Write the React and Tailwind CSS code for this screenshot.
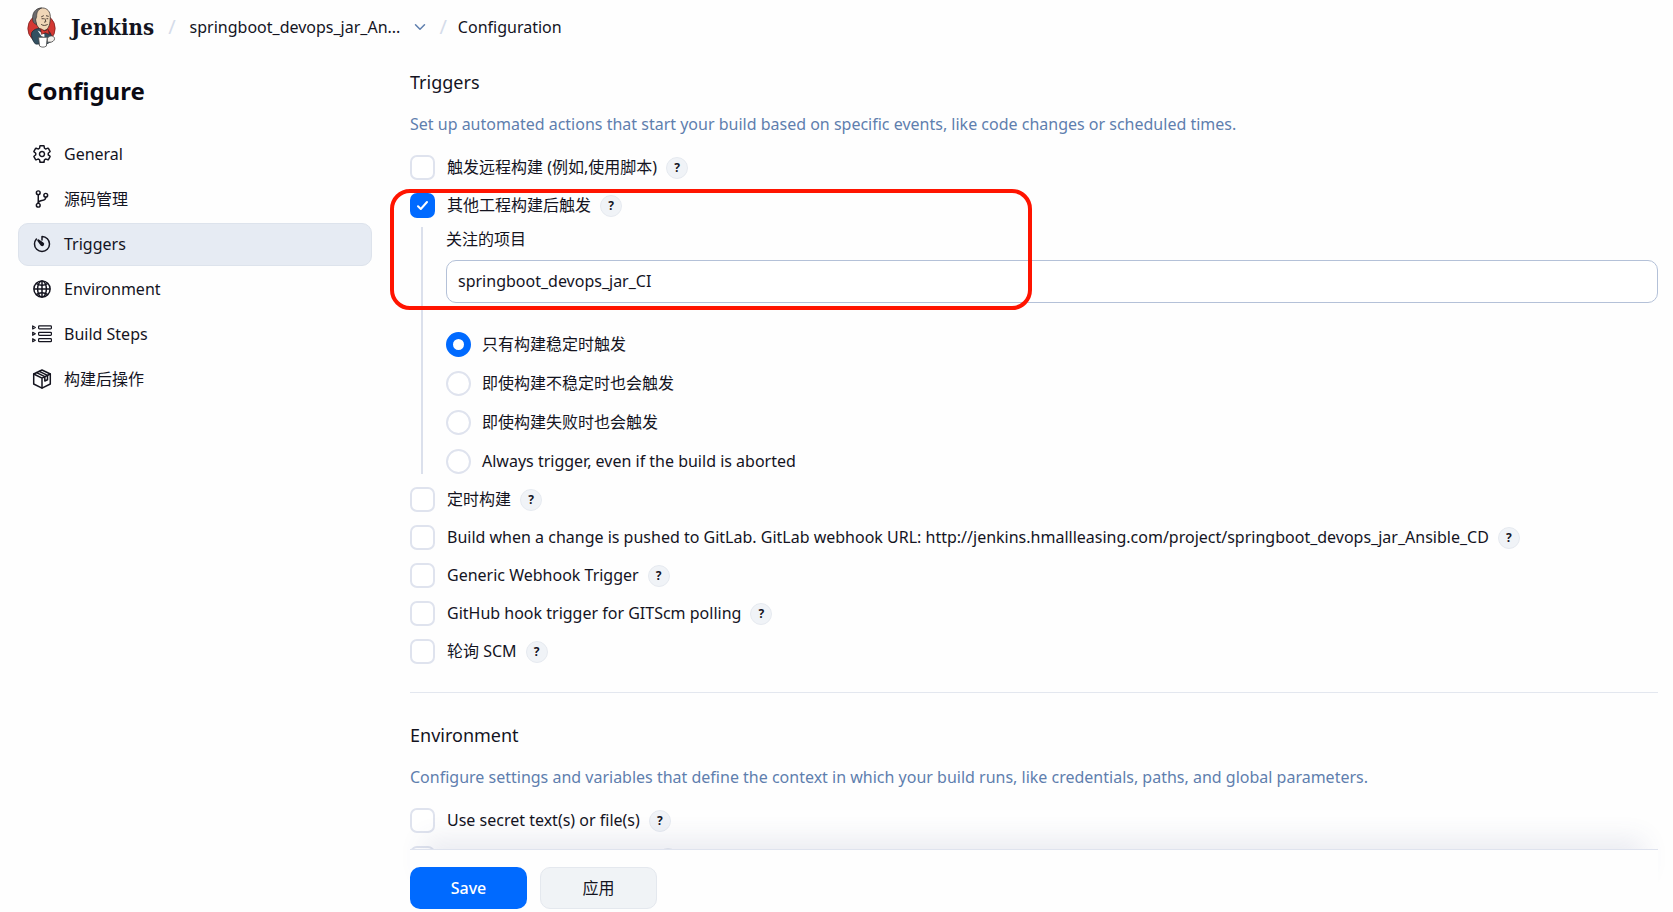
import React from 'react';
import {
    IoSettingsOutline,
    IoGitBranchOutline,
    IoTimerOutline,
    IoGlobeOutline,
    IoChevronDown,
} from 'react-icons/io5';

const StepsIcon = ({ className = "" }) => (
    <svg viewBox="0 0 20 20" fill="none" stroke="currentColor" strokeWidth="1.2" strokeLinejoin="round" className={className}>
        <path d="M0.7 1.9v3l2.6-1.5zM0.7 8.3v3l2.6-1.5zM0.7 14.7v3l2.6-1.5z" />
        <rect x="6.6" y="1.9" width="12.8" height="3" rx="0.8" />
        <rect x="6.6" y="8.3" width="12.8" height="3" rx="0.8" />
        <rect x="6.6" y="14.7" width="12.8" height="3" rx="0.8" />
    </svg>
);

const PackageIcon = ({ className = "" }) => (
    <svg viewBox="0 0 20 20" fill="none" stroke="currentColor" strokeWidth="1.5" strokeLinejoin="round" strokeLinecap="round" className={className}>
        <path d="M10 1 18.3 5v10L10 19.1 1.7 15V5z" />
        <path d="M1.7 5 10 9.2 18.3 5M10 9.2v9.8" />
        <path d="M4.6 3.6 12.8 7.7v4.3l2.7-1.3V6.4L7.3 2.3" />
    </svg>
);

const JenkinsLogo = ({ className = "" }) => (
    <svg viewBox="0 0 30 42" className={className} aria-hidden="true">
        <ellipse cx="15" cy="22" rx="14" ry="14.5" fill="#d33833" stroke="#7d1f1c" strokeWidth="0.8" />
        <path d="M5 26c2-3 5-4 8-4l5 1c4 0 6 3 7 6l1 6-6 3H9c-3-3-5-8-4-12z" fill="#335061" stroke="#1b2b35" strokeWidth="0.8" />
        <path d="M8 9c0-5 4-8 8-8 5 0 8 4 8 9 0 6-1 13-6 14-6 0-10-7-10-15z" fill="#f0d6b7" stroke="#3b3531" strokeWidth="0.8" />
        <path d="M6 13C5 6 9 1 15 1c-4 2-5 5-5 9l-1 3 1 5c-3-1-4-3-4-5z" fill="#6d6b6d" stroke="#2b2a2a" strokeWidth="0.6" />
        <path d="M15 10l2-1M20 9l2 .5M15.5 12h1.5M20.5 12h1M18.5 12l1 3-1.5.5M15 18c2 1.5 4 1 6 0" fill="none" stroke="#3b2f28" strokeWidth="0.9" strokeLinecap="round" />
        <path d="M11 24l4 6 3 1v-3l-3-2z" fill="#fff" />
        <path d="M14 22l4 2.5 4-1.5 1 5-4-1.5-4 1.5z" fill="#d33833" stroke="#5c1512" strokeWidth="0.6" />
        <path d="M12 31h9l-1 9c-2 1.5-5 1.5-7 0z" fill="#fff" stroke="#444" strokeWidth="0.8" />
        <path d="M21 32c2-3 5-3 7-1 1 2 0 4-3 5l-4 0z" fill="#f3f0ec" stroke="#444" strokeWidth="0.8" />
    </svg>
);

const navItems = [
    { label: 'General', icon: IoSettingsOutline, bold: true },
    { label: '源码管理', icon: IoGitBranchOutline, bold: true },
    { label: 'Triggers', icon: IoTimerOutline, bold: true, active: true },
    { label: 'Environment', icon: IoGlobeOutline, bold: true },
    { label: 'Build Steps', icon: StepsIcon },
    { label: '构建后操作', icon: PackageIcon },
];

const HelpButton = ({ children }) => (
    <button
        type="button"
        aria-label="Help"
        className="flex size-[22px] shrink-0 items-center justify-center rounded-full border border-[#e6eaf0] bg-[#f0f3f7] text-xs font-bold"
    >
        {children}
    </button>
);

const Checkbox = ({ id, checked, ...rest }) => (
    <span className="relative flex size-[25px] shrink-0">
        <input
            id={id}
            type="checkbox"
            defaultChecked={checked}
            className="peer size-[25px] appearance-none rounded-[7px] border-2 border-[#dfe3ee] bg-white checked:border-[#006aff] checked:bg-[#006aff]"
            {...rest}
        />
        <svg viewBox="0 0 25 25" className="pointer-events-none absolute inset-0 hidden peer-checked:block" fill="none" stroke="#fff" strokeWidth="2" strokeLinecap="round" strokeLinejoin="round">
            <path d="M8 13.3 10.8 16 17 9" />
        </svg>
    </span>
);

const CheckRow = ({ id, label, checked }) => (
    <div className="flex h-[25px] items-center">
        <Checkbox id={id} checked={checked} />
        <label htmlFor={id} className="mr-[9px] ml-3 pb-[2px]">{label}</label>
        <HelpButton>?</HelpButton>
    </div>
);

const RadioRow = ({ id, label, checked }) => (
    <div className="flex h-[25px] items-center gap-[11px]">
        <input
            id={id}
            name="threshold"
            type="radio"
            defaultChecked={checked}
            className="size-[25px] shrink-0 appearance-none rounded-full border-2 border-[#dfe3ee] bg-white checked:border-[7px] checked:border-[#006aff]"
        />
        <label htmlFor={id} className="pb-[2px]">{label}</label>
    </div>
);

const Section = ({ title, description, children }) => (
    <section>
        <h2 className="text-lg leading-7">{title}</h2>
        <p className="mt-4 mb-[19px] leading-6 text-[#5f7fae]">{description}</p>
        <div className="flex flex-col gap-[13px]">{children}</div>
    </section>
);

const Header = () => (
    <header className="flex h-[54px] shrink-0 items-center pl-[26px]">
        <a href="#" className="flex items-center gap-[14px]">
            <JenkinsLogo className="h-[41px] w-[31px]" />
            <span className="font-['DejaVu_Serif_Condensed','DejaVu_Serif',serif] text-[22px] font-bold">Jenkins</span>
        </a>
        <span className="mx-[14px] text-xl text-[#d5dcea]">/</span>
        <a href="#">springboot_devops_jar_An...</a>
        <button type="button" aria-label="More" className="ml-3 text-[#5f7fae]">
            <IoChevronDown className="size-4" />
        </button>
        <span className="mx-[11px] text-xl text-[#d5dcea]">/</span>
        <a href="#">Configuration</a>
    </header>
);

const Sidebar = () => (
    <aside className="w-[390px] shrink-0 px-[18px]">
        <h1 className="mt-[19px] mb-6 pl-[9px] text-2xl leading-9 font-bold text-[#0a0a14]">Configure</h1>
        <nav className="flex flex-col gap-[2px]">
            {navItems.map(({ label, icon: Icon, bold, active }) => (
                <a
                    key={label}
                    href="#"
                    className={`flex h-[43px] items-center gap-3 rounded-[10px] border pb-[2px] pl-[13px] ${active ? 'border-[#dde3ec] bg-[#e6ebf3]' : 'border-transparent'}`}
                >
                    <Icon className={bold ? 'size-5 [&_*]:[stroke-width:38px]' : 'size-5'} />
                    {label}
                </a>
            ))}
        </nav>
    </aside>
);

export default function App() {
    return (
        <div className="flex h-screen flex-col overflow-hidden bg-[#fefefe] font-['Noto_Sans','Noto_Sans_CJK_SC',sans-serif] text-base text-[#14141f]">
            <Header />
            <div className="flex min-h-0 flex-1">
                <Sidebar />
                <div className="flex min-w-0 flex-1 flex-col pr-[15px] pl-5">
                    <main className="-ml-5 min-h-0 flex-1 overflow-hidden pt-[14px] pl-5">
                        <Section
                            title="Triggers"
                            description="Set up automated actions that start your build based on specific events, like code changes or scheduled times."
                        >
                            <CheckRow id="remote" label="触发远程构建 (例如,使用脚本)" />
                            <div className="relative">
                                <CheckRow id="upstream" label="其他工程构建后触发" checked />
                                <div className="mt-[9px] ml-[11px] border-l-2 border-[#dbe0ec] pl-[23px]">
                                    <label htmlFor="projects" className="block leading-6">关注的项目</label>
                                    <input
                                        id="projects"
                                        type="text"
                                        defaultValue="springboot_devops_jar_CI"
                                        className="mt-[9px] mb-[29px] block h-[43px] w-full rounded-[10px] border border-[#b4c1d8] bg-white px-[11px] pb-[2px]"
                                    />
                                    <div className="flex flex-col gap-[14px]">
                                        <RadioRow id="stable" label="只有构建稳定时触发" checked />
                                        <RadioRow id="unstable" label="即使构建不稳定时也会触发" />
                                        <RadioRow id="failed" label="即使构建失败时也会触发" />
                                        <RadioRow id="always" label="Always trigger, even if the build is aborted" />
                                    </div>
                                </div>
                                <div className="pointer-events-none absolute -top-1 -left-5 h-[121px] w-[642px] rounded-[20px] border-4 border-[#ff1400]" />
                            </div>
                            <CheckRow id="timer" label="定时构建" />
                            <CheckRow id="gitlab" label="Build when a change is pushed to GitLab. GitLab webhook URL: http://jenkins.hmallleasing.com/project/springboot_devops_jar_Ansible_CD" />
                            <CheckRow id="generic" label="Generic Webhook Trigger" />
                            <CheckRow id="github" label="GitHub hook trigger for GITScm polling" />
                            <CheckRow id="scm" label="轮询 SCM" />
                        </Section>
                        <hr className="my-7 border-[#e3e7ef]" />
                        <Section
                            title="Environment"
                            description="Configure settings and variables that define the context in which your build runs, like credentials, paths, and global parameters."
                        >
                            <CheckRow id="secrets" label="Use secret text(s) or file(s)" />
                            <div className="flex h-[25px] items-center gap-[222px]">
                                <Checkbox id="ssh" aria-label="SSH" />
                                <HelpButton />
                            </div>
                        </Section>
                    </main>
                    <footer className="relative z-10 flex h-[63px] shrink-0 gap-[13px] border-t border-[#dfe3ee] bg-[#fefefe] pt-[17px] shadow-[0_-24px_26px_-14px_rgba(70,80,140,0.11)]">
                        <button type="button" className="h-[42px] w-[117px] rounded-[10px] bg-[#006aff] font-medium text-white">Save</button>
                        <button type="button" className="h-[42px] w-[117px] rounded-[10px] border border-[#e4e8ee] bg-[#f0f3f6]">应用</button>
                    </footer>
                </div>
            </div>
        </div>
    );
}
